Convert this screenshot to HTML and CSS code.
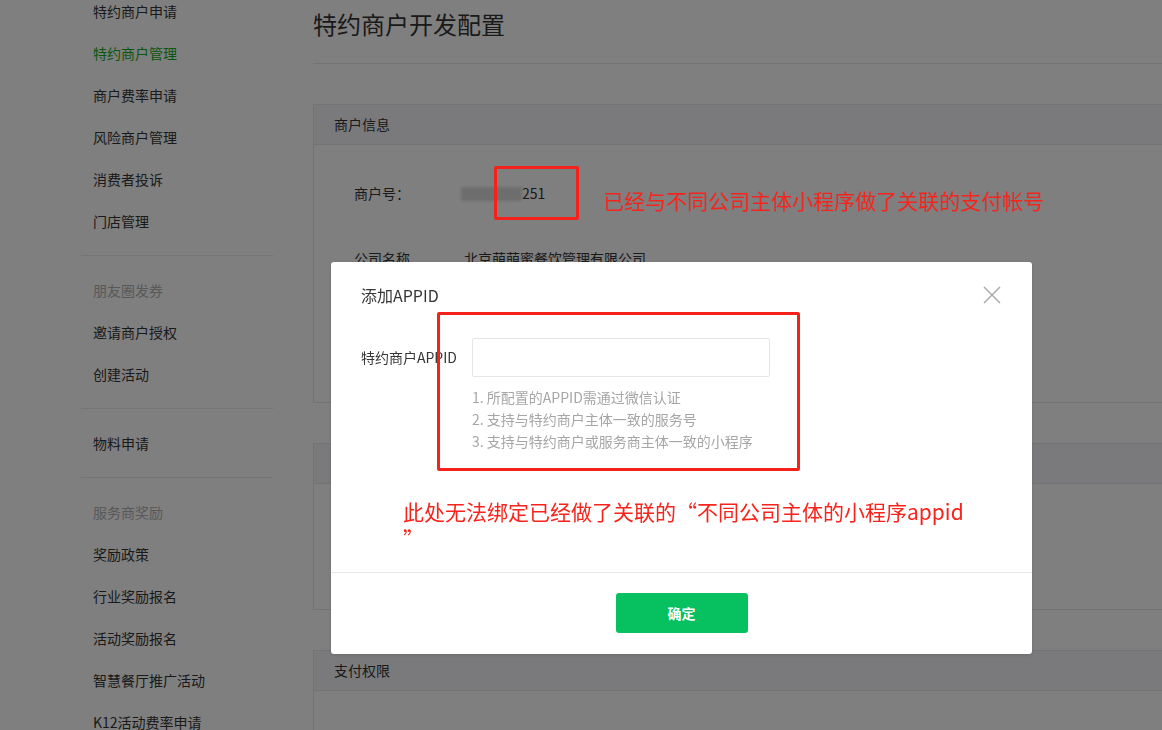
FILE: index.html
```html
<!DOCTYPE html>
<html lang="zh-CN">
<head>
<meta charset="utf-8">
<title>特约商户开发配置</title>
<link rel="stylesheet" href="styles.css">
</head>
<body>
<div class="page">
  <aside class="sidebar">
    <div class="nav-group">
      <a class="nav-item">特约商户申请</a>
      <a class="nav-item active">特约商户管理</a>
      <a class="nav-item">商户费率申请</a>
      <a class="nav-item">风险商户管理</a>
      <a class="nav-item">消费者投诉</a>
      <a class="nav-item">门店管理</a>
    </div>
    <div class="nav-group">
      <div class="nav-item nav-title">朋友圈发券</div>
      <a class="nav-item">邀请商户授权</a>
      <a class="nav-item">创建活动</a>
    </div>
    <div class="nav-group">
      <a class="nav-item">物料申请</a>
    </div>
    <div class="nav-group">
      <div class="nav-item nav-title">服务商奖励</div>
      <a class="nav-item">奖励政策</a>
      <a class="nav-item">行业奖励报名</a>
      <a class="nav-item">活动奖励报名</a>
      <a class="nav-item">智慧餐厅推广活动</a>
      <a class="nav-item">K12活动费率申请</a>
    </div>
  </aside>

  <main class="main">
    <h1 class="page-title">特约商户开发配置</h1>

    <section class="panel">
      <div class="panel-hd">商户信息</div>
      <div class="panel-bd panel-bd-info">
        <div class="info-row">
          <span class="info-label">商户号：</span>
          <span class="info-value"><span class="masked"></span>251</span>
          <span class="mark mark-id"></span>
          <span class="note note-id">已经与不同公司主体小程序做了关联的支付帐号</span>
        </div>
        <div class="info-row">
          <span class="info-label">公司名称</span>
          <span class="info-value info-value-company">北京萌萌蜜餐饮管理有限公司</span>
        </div>
      </div>
    </section>

    <section class="panel">
      <div class="panel-hd">开发配置</div>
      <div class="panel-bd panel-bd-dev"></div>
    </section>

    <section class="panel">
      <div class="panel-hd">支付权限</div>
      <div class="panel-bd panel-bd-pay"></div>
    </section>
  </main>
</div>

<div class="mask"></div>

<div class="modal">
  <div class="modal-hd">
    <h3 class="modal-title">添加APPID</h3>
    <button class="modal-close" aria-label="关闭">
      <svg width="18" height="18" viewBox="0 0 18 18"><path d="M1 1 L17 17 M17 1 L1 17" stroke="#a6a6a6" stroke-width="1.4" fill="none"/></svg>
    </button>
  </div>
  <div class="modal-bd">
    <div class="form-row">
      <label class="form-label">特约商户APPID</label>
      <div class="form-field">
        <input class="input" type="text">
        <ul class="hints">
          <li>1. 所配置的APPID需通过微信认证</li>
          <li>2. 支持与特约商户主体一致的服务号</li>
          <li>3. 支持与特约商户或服务商主体一致的小程序</li>
        </ul>
      </div>
    </div>
    <p class="note note-modal">此处无法绑定已经做了关联的“不同公司主体的小程序appid<br>”</p>
    <span class="mark mark-form"></span>
  </div>
  <div class="modal-ft">
    <button class="btn-primary">确定</button>
  </div>
</div>
</body>
</html>
```
FILE: styles.css
```css
html, body {
  margin: 0;
  height: 100%;
  overflow: hidden;
  background: #fff;
  font-family: "Noto Sans CJK SC", "Noto Sans", sans-serif;
  color: #353535;
}

.page {
  display: flex;
  align-items: flex-start;
}

/* sidebar */
.sidebar {
  width: 192px;
  margin-left: 81px;
  margin-top: -23px;
  flex-shrink: 0;
}
.nav-group {
  padding: 13px 0;
  border-top: 1px solid #e4e8eb;
}
.nav-group:first-child {
  border-top: none;
}
.nav-item {
  display: block;
  height: 42px;
  line-height: 42px;
  padding-left: 12px;
  font-size: 14px;
  color: #353535;
  text-decoration: none;
  white-space: nowrap;
}
.nav-item.active {
  color: #1aad19;
}
.nav-title {
  color: #b2b2b2;
}

/* main */
.main {
  flex: 1;
  min-width: 0;
  margin-left: 40px;
  margin-right: -10px;
}
.page-title {
  margin: 0;
  font-size: 24px;
  font-weight: normal;
  line-height: 47px;
  padding-bottom: 16px;
  border-bottom: 1px solid #e7e7eb;
}
.panel {
  margin-top: 40px;
  border: 1px solid #e7e7eb;
}
.panel-hd {
  height: 39px;
  line-height: 39px;
  padding-left: 20px;
  background: #f4f5f9;
  border-bottom: 1px solid #e7e7eb;
  font-size: 14px;
}
.panel-bd {
  box-sizing: border-box;
  padding: 37px 0 0 40px;
}
.panel-bd-info { height: 257px; }
.panel-bd-dev { height: 125px; }
.panel-bd-pay { height: 120px; }

.info-row {
  position: relative;
  display: flex;
  line-height: 22px;
  font-size: 14px;
  margin-bottom: 43px;
}
.info-label {
  width: 107px;
  flex-shrink: 0;
}
.info-value-company {
  margin-left: 3px;
}
.masked {
  display: inline-block;
  width: 61px;
  height: 14px;
  vertical-align: -2px;
  background: #dcdcdc;
  filter: blur(1.5px);
}

/* annotations (drawn over the dim layer) */
.mark {
  position: absolute;
  box-sizing: border-box;
  border: 3px solid #f5221b;
  border-radius: 2px;
  z-index: 30;
}
.note {
  color: #f7241c;
  font-size: 21px;
  z-index: 30;
}
.mark-id {
  left: 140px;
  top: -16px;
  width: 85px;
  height: 54px;
}
.note-id {
  position: absolute;
  left: 249px;
  top: 3px;
  line-height: 30px;
  white-space: nowrap;
}

/* dim layer */
.mask {
  position: fixed;
  inset: 0;
  background: rgba(0, 0, 0, 0.5);
  z-index: 10;
}

/* dialog */
.modal {
  position: fixed;
  left: 331px;
  top: 262px;
  width: 701px;
  background: #fff;
  border-radius: 3px;
  z-index: 20;
  box-shadow: 0 1px 4px rgba(0, 0, 0, 0.12);
}
.modal-hd {
  position: relative;
  padding: 22px 30px 0;
}
.modal-title {
  margin: 0;
  font-size: 16px;
  font-weight: normal;
  line-height: 22px;
  color: #353535;
}
.modal-close {
  position: absolute;
  right: 31px;
  top: 24px;
  width: 18px;
  height: 18px;
  padding: 0;
  border: none;
  background: none;
  display: flex;
}
.modal-bd {
  position: relative;
  padding: 32px 30px 20px;
}
.form-row {
  display: flex;
  align-items: flex-start;
}
.form-label {
  width: 111px;
  flex-shrink: 0;
  font-size: 14px;
  line-height: 39px;
  color: #353535;
}
.input {
  display: block;
  box-sizing: border-box;
  width: 298px;
  height: 39px;
  margin: 0;
  border: 1px solid #e6e6e6;
  border-radius: 2px;
  outline: none;
}
.hints {
  list-style: none;
  margin: 9px 0 0;
  padding: 0;
  font-size: 14px;
  line-height: 22px;
  color: #a6a6a6;
}
.note-modal {
  margin: 46px 0 0 42px;
  line-height: 27px;
}
.mark-form {
  left: 106px;
  top: 6px;
  width: 363px;
  height: 159px;
}
.modal-ft {
  border-top: 1px solid #e7e7eb;
  padding: 20px 0 21px;
  display: flex;
  justify-content: center;
}
.btn-primary {
  width: 132px;
  height: 40px;
  border: none;
  border-radius: 3px;
  background: #07c160;
  color: #fff;
  font-family: inherit;
  font-size: 14px;
  font-weight: bold;
}
```
